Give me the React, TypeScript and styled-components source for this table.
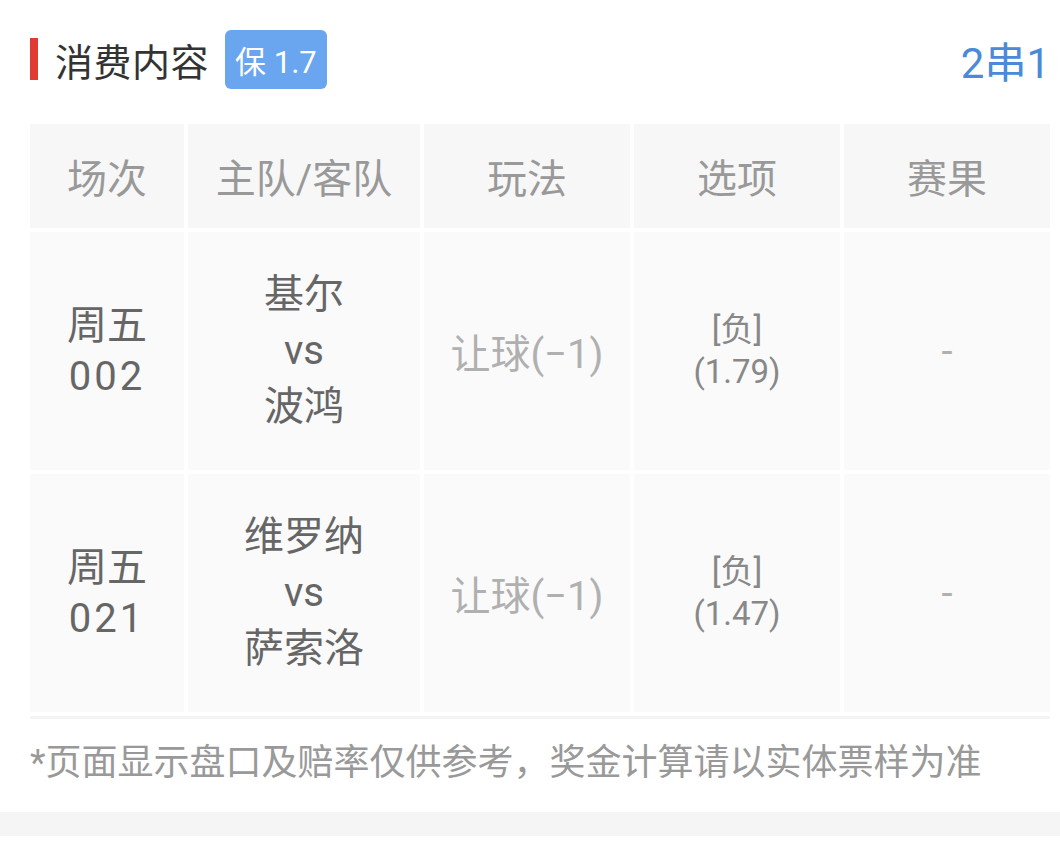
import { createGlobalStyle, styled } from "styled-components";

const GlobalStyle = createGlobalStyle`
    html, body {
        margin: 0;
        padding: 0;
        background: #ffffff;
    }
    body {
        font-family: Roboto, "Noto Sans CJK SC", sans-serif;
    }
`;

type Match = {
    day: string;
    no: string;
    home: string;
    away: string;
    play: string;
    pick: string;
    odds: string;
    result: string;
};

const matches: Match[] = [
    { day: "周五", no: "002", home: "基尔", away: "波鸿", play: "让球(−1)", pick: "[负]", odds: "(1.79)", result: "-" },
    { day: "周五", no: "021", home: "维罗纳", away: "萨索洛", play: "让球(−1)", pick: "[负]", odds: "(1.47)", result: "-" },
];

const heads = ["场次", "主队/客队", "玩法", "选项", "赛果"];

const App = () => {
    return (
        <>
            <GlobalStyle />
            <Page>
                <TitleBar>
                    <TitleLeft>
                        <RedMark />
                        <Title>消费内容</Title>
                        <Badge>保 1.7</Badge>
                    </TitleLeft>
                    <Mode>2串1</Mode>
                </TitleBar>
                <Table>
                    {heads.map((h) => (
                        <HeadCell key={h}>{h}</HeadCell>
                    ))}
                    {matches.map((m) => (
                        <Row key={m.no}>
                            <Cell>
                                <Lines>
                                    <span>{m.day}</span>
                                    <Digits>{m.no}</Digits>
                                </Lines>
                            </Cell>
                            <Cell>
                                <Teams>
                                    <span>{m.home}</span>
                                    <span>vs</span>
                                    <span>{m.away}</span>
                                </Teams>
                            </Cell>
                            <Cell $light>{m.play}</Cell>
                            <Cell>
                                <Pick>
                                    <span>{m.pick}</span>
                                    <span>{m.odds}</span>
                                </Pick>
                            </Cell>
                            <Cell $light>{m.result}</Cell>
                        </Row>
                    ))}
                </Table>
                <Note>*页面显示盘口及赔率仅供参考，奖金计算请以实体票样为准</Note>
            </Page>
            <Band />
        </>
    );
};

export default App;

const Page = styled.div`
    padding: 0 10px 0 30px;
    background: #ffffff;
`;

const TitleBar = styled.div`
    display: flex;
    justify-content: space-between;
    align-items: center;
    height: 124px;
    padding-bottom: 6px;
    box-sizing: border-box;
`;

const TitleLeft = styled.div`
    display: flex;
    align-items: center;
`;

const RedMark = styled.div`
    width: 8px;
    height: 42px;
    background: #e03a32;
    margin-right: 17px;
`;

const Title = styled.span`
    font-size: 38px;
    color: #333333;
    letter-spacing: 0.5px;
`;

const Badge = styled.span`
    margin-left: 16px;
    height: 59px;
    padding: 0 10px;
    display: flex;
    align-items: center;
    background: #6aa5ef;
    border-radius: 6px;
    color: #ffffff;
    font-size: 31px;
`;

const Mode = styled.span`
    font-size: 42px;
    color: #4a8ad8;
`;

const Table = styled.div`
    display: grid;
    grid-template-columns: 154px 232px 206px 206px 1fr;
    column-gap: 4px;
    row-gap: 4px;
    padding-bottom: 4px;
    border-bottom: 3px solid #f4f4f4;
`;

const HeadCell = styled.div`
    height: 104px;
    display: flex;
    align-items: center;
    justify-content: center;
    background: #f7f7f7;
    color: #999999;
    font-size: 40px;
`;

const Row = styled.div`
    display: contents;
`;

const Cell = styled.div<{ $light?: boolean }>`
    min-height: 238px;
    display: flex;
    align-items: center;
    justify-content: center;
    text-align: center;
    background: #fafafa;
    color: ${(p) => (p.$light ? "#b0b0b0" : "#666666")};
    font-size: 40px;
`;

const Lines = styled.div`
    display: flex;
    flex-direction: column;
    line-height: 51px;
    font-size: 40px;
`;

const Digits = styled.span`
    letter-spacing: 3px;
`;

const Teams = styled.div`
    display: flex;
    flex-direction: column;
    line-height: 56px;
    font-size: 40px;
`;

const Pick = styled.div`
    display: flex;
    flex-direction: column;
    line-height: 42px;
    font-size: 33px;
    color: #888888;
`;

const Note = styled.div`
    height: 93px;
    padding-bottom: 14px;
    box-sizing: border-box;
    display: flex;
    align-items: center;
    font-size: 36px;
    color: #999999;
`;

const Band = styled.div`
    height: 24px;
    background: #f5f5f5;
`;
